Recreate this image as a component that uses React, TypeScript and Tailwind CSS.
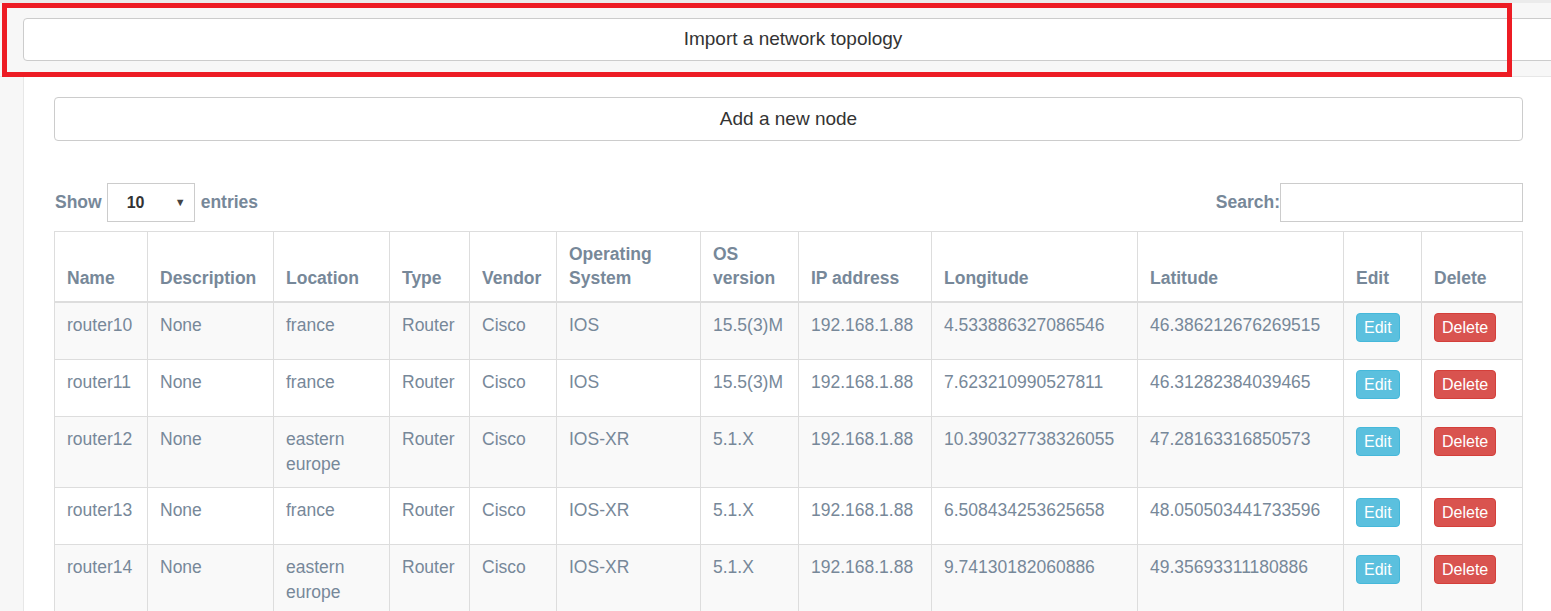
import type { FC } from "react";

interface NodeRow {
  name: string;
  description: string;
  location: string;
  type: string;
  vendor: string;
  os: string;
  version: string;
  ip: string;
  longitude: string;
  latitude: string;
}

const rows: NodeRow[] = [
  { name: "router10", description: "None", location: "france", type: "Router", vendor: "Cisco", os: "IOS", version: "15.5(3)M", ip: "192.168.1.88", longitude: "4.533886327086546", latitude: "46.386212676269515" },
  { name: "router11", description: "None", location: "france", type: "Router", vendor: "Cisco", os: "IOS", version: "15.5(3)M", ip: "192.168.1.88", longitude: "7.623210990527811", latitude: "46.31282384039465" },
  { name: "router12", description: "None", location: "eastern europe", type: "Router", vendor: "Cisco", os: "IOS-XR", version: "5.1.X", ip: "192.168.1.88", longitude: "10.390327738326055", latitude: "47.28163316850573" },
  { name: "router13", description: "None", location: "france", type: "Router", vendor: "Cisco", os: "IOS-XR", version: "5.1.X", ip: "192.168.1.88", longitude: "6.508434253625658", latitude: "48.050503441733596" },
  { name: "router14", description: "None", location: "eastern europe", type: "Router", vendor: "Cisco", os: "IOS-XR", version: "5.1.X", ip: "192.168.1.88", longitude: "9.74130182060886", latitude: "49.35693311180886" },
];

const columns = [
  { label: "Name", width: "w-[93px]" },
  { label: "Description", width: "w-[126px]" },
  { label: "Location", width: "w-[116px]" },
  { label: "Type", width: "w-[80px]" },
  { label: "Vendor", width: "w-[87px]" },
  { label: "Operating System", width: "w-[144px]" },
  { label: "OS version", width: "w-[98px]" },
  { label: "IP address", width: "w-[133px]" },
  { label: "Longitude", width: "w-[206px]" },
  { label: "Latitude", width: "w-[206px]" },
  { label: "Edit", width: "w-[78px]" },
  { label: "Delete", width: "w-[101px]" },
];

const cell = "border border-[#dddddd] px-3 pt-[10px] pb-[10px] align-top";
const btnCell = "border border-[#dddddd] px-3 pt-[10px] pb-[17px] align-top";

const NodeTable: FC = () => (
  <table className="w-[1468px] table-fixed border-collapse text-[17.5px] leading-[25px] text-[#778899]">
    <colgroup>
      {columns.map((c) => (
        <col key={c.label} className={c.width} />
      ))}
    </colgroup>
    <thead>
      <tr>
        {columns.map((c) => (
          <th
            key={c.label}
            className="border border-b-2 border-[#dddddd] px-3 pt-[10px] pb-[11px] text-left align-bottom font-bold leading-[24px]"
          >
            {c.label}
          </th>
        ))}
      </tr>
    </thead>
    <tbody>
      {rows.map((r, i) => (
        <tr key={r.name} className={i % 2 === 0 ? "bg-[#f9f9f9]" : "bg-white"}>
          <td className={cell}>{r.name}</td>
          <td className={cell}>{r.description}</td>
          <td className={cell}>{r.location}</td>
          <td className={cell}>{r.type}</td>
          <td className={cell}>{r.vendor}</td>
          <td className={cell}>{r.os}</td>
          <td className={cell}>{r.version}</td>
          <td className={cell}>{r.ip}</td>
          <td className={cell}>{r.longitude}</td>
          <td className={cell}>{r.latitude}</td>
          <td className={btnCell}>
            <button className="flex h-[29px] items-center rounded-[4px] border border-[#46b8da] bg-[#5bc0de] px-[7px] text-[16px] text-white">
              Edit
            </button>
          </td>
          <td className={btnCell}>
            <button className="flex h-[29px] items-center rounded-[4px] border border-[#d43f3a] bg-[#d9534f] px-[7px] text-[16px] text-white">
              Delete
            </button>
          </td>
        </tr>
      ))}
    </tbody>
  </table>
);

const App: FC = () => {
  return (
    <div className="relative h-[611px] w-[1551px] overflow-hidden bg-white font-['Liberation_Sans',Arial,sans-serif]">
      <div className="h-[77px] overflow-hidden border-t-[3px] border-b border-t-[#ebebeb] border-b-[#e7e7e7] bg-[#f7f7f7] pt-[15px] pl-[23px]">
        <button className="flex h-[43px] w-[1540px] items-center justify-center rounded-[4px] border border-[#cccccc] bg-white text-[19px] text-[#333333]">
          Import a network topology
        </button>
      </div>

      <div className="absolute left-[2px] top-[3px] h-[74px] w-[1510px] border-[5px] border-[#ed1c24]" />

      <div className="flex h-[534px]">
        <div className="w-[24px] shrink-0 border-r border-[#e7e7e7] bg-[#f7f7f7]" />
        <main className="flex-1 pl-[30px] pr-[29px] pt-[20px]">
          <button className="flex h-[44px] w-full items-center justify-center rounded-[4px] border border-[#cccccc] bg-white text-[19px] text-[#333333]">
            Add a new node
          </button>

          <div className="mt-[42px] flex h-[39px] items-center justify-between text-[17.5px] font-bold text-[#778899]">
            <div className="flex items-center">
              <span className="ml-px">Show</span>
              <div className="ml-[5px] flex h-[39px] w-[88px] items-center justify-between border border-[#cccccc] bg-white pl-[19px] pr-[8px] text-[16px] text-[#333333]">
                <span>10</span>
                <span className="text-[11px] text-[#444444]">▼</span>
              </div>
              <span className="ml-[6px]">entries</span>
            </div>
            <div className="flex items-center">
              <span>Search:</span>
              <div className="h-[39px] w-[243px] border border-[#cccccc] bg-white" />
            </div>
          </div>

          <div className="mt-[9px]">
            <NodeTable />
          </div>
        </main>
      </div>
    </div>
  );
};

export default App;
